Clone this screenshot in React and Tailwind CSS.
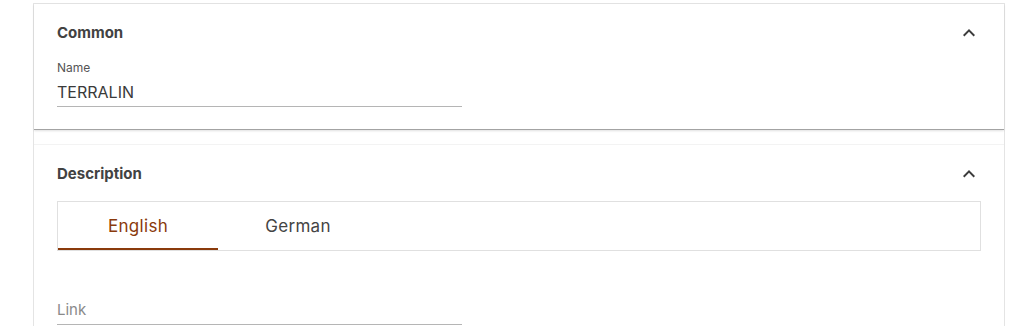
import React, { useState } from 'react';

function ExpandLess() {
    return (
        <svg viewBox="0 0 24 24" className="w-6 h-6 fill-[#3c3c3c]">
            <path d="M12 8l-6 6 1.41 1.41L12 10.83l4.59 4.58L18 14z" />
        </svg>
    );
}

function SectionHeader({ title }) {
    return (
        <div className="flex items-center justify-between pr-[23px]">
            <h2 className="text-[15px] leading-[20px] font-bold text-[#424242] font-['Inter',sans-serif]">{title}</h2>
            <ExpandLess />
        </div>
    );
}

export default function App() {
    const [tab, setTab] = useState('en');
    const tabs = [
        { id: 'en', label: 'English' },
        { id: 'de', label: 'German' },
    ];

    return (
        <div className="w-[1030px] h-[326px] bg-white overflow-hidden pt-[3px]">
            <div className="ml-[33px] w-[972px] border-x border-t border-[#e4e4e4] h-[340px]">
                {/* Common */}
                <section className="pl-[23px] pt-[17px] h-[126px] border-b border-[#a3a3a3] shadow-[0_1px_2px_rgba(0,0,0,0.12)]">
                    <SectionHeader title="Common" />
                    <div className="w-[405px] mt-[16px]">
                        <label className="block text-[12px] leading-[14px] text-[#555] font-['Inter',sans-serif]">Name</label>
                        <div className="mt-[7px] pb-[4px] border-b border-[#b5b5b5] text-[16px] leading-[20px] text-[#3a3a3a] font-['Inter',sans-serif]">
                            TERRALIN
                        </div>
                    </div>
                </section>

                {/* Description */}
                <section className="mt-[14px] pl-[23px] pt-[17px] border-t border-[#f3f3f3]">
                    <SectionHeader title="Description" />
                    <div className="mt-[15px] mr-[23px] flex border border-[#e0e0e0] h-[50px]">
                        {tabs.map((t) => (
                            <button
                                key={t.id}
                                onClick={() => setTab(t.id)}
                                className={
                                    'w-[160px] h-full pt-[4px] flex items-center justify-center text-[17px] tracking-[0.3px] font-["Inter",sans-serif] border-b-2 ' +
                                    (tab === t.id ? 'text-[#8a3a0c] border-[#8a3a0c]' : 'text-[#444] border-transparent')
                                }
                            >
                                {t.label}
                            </button>
                        ))}
                    </div>
                    <div className="w-[405px] mt-[46px]">
                        <input
                            placeholder="Link"
                            className="w-full pb-[4px] border-b border-[#b5b5b5] text-[15px] leading-[20px] text-[#3a3a3a] placeholder:text-[#8a8a8a] outline-none font-['Inter',sans-serif]"
                        />
                    </div>
                </section>
            </div>
        </div>
    );
}
